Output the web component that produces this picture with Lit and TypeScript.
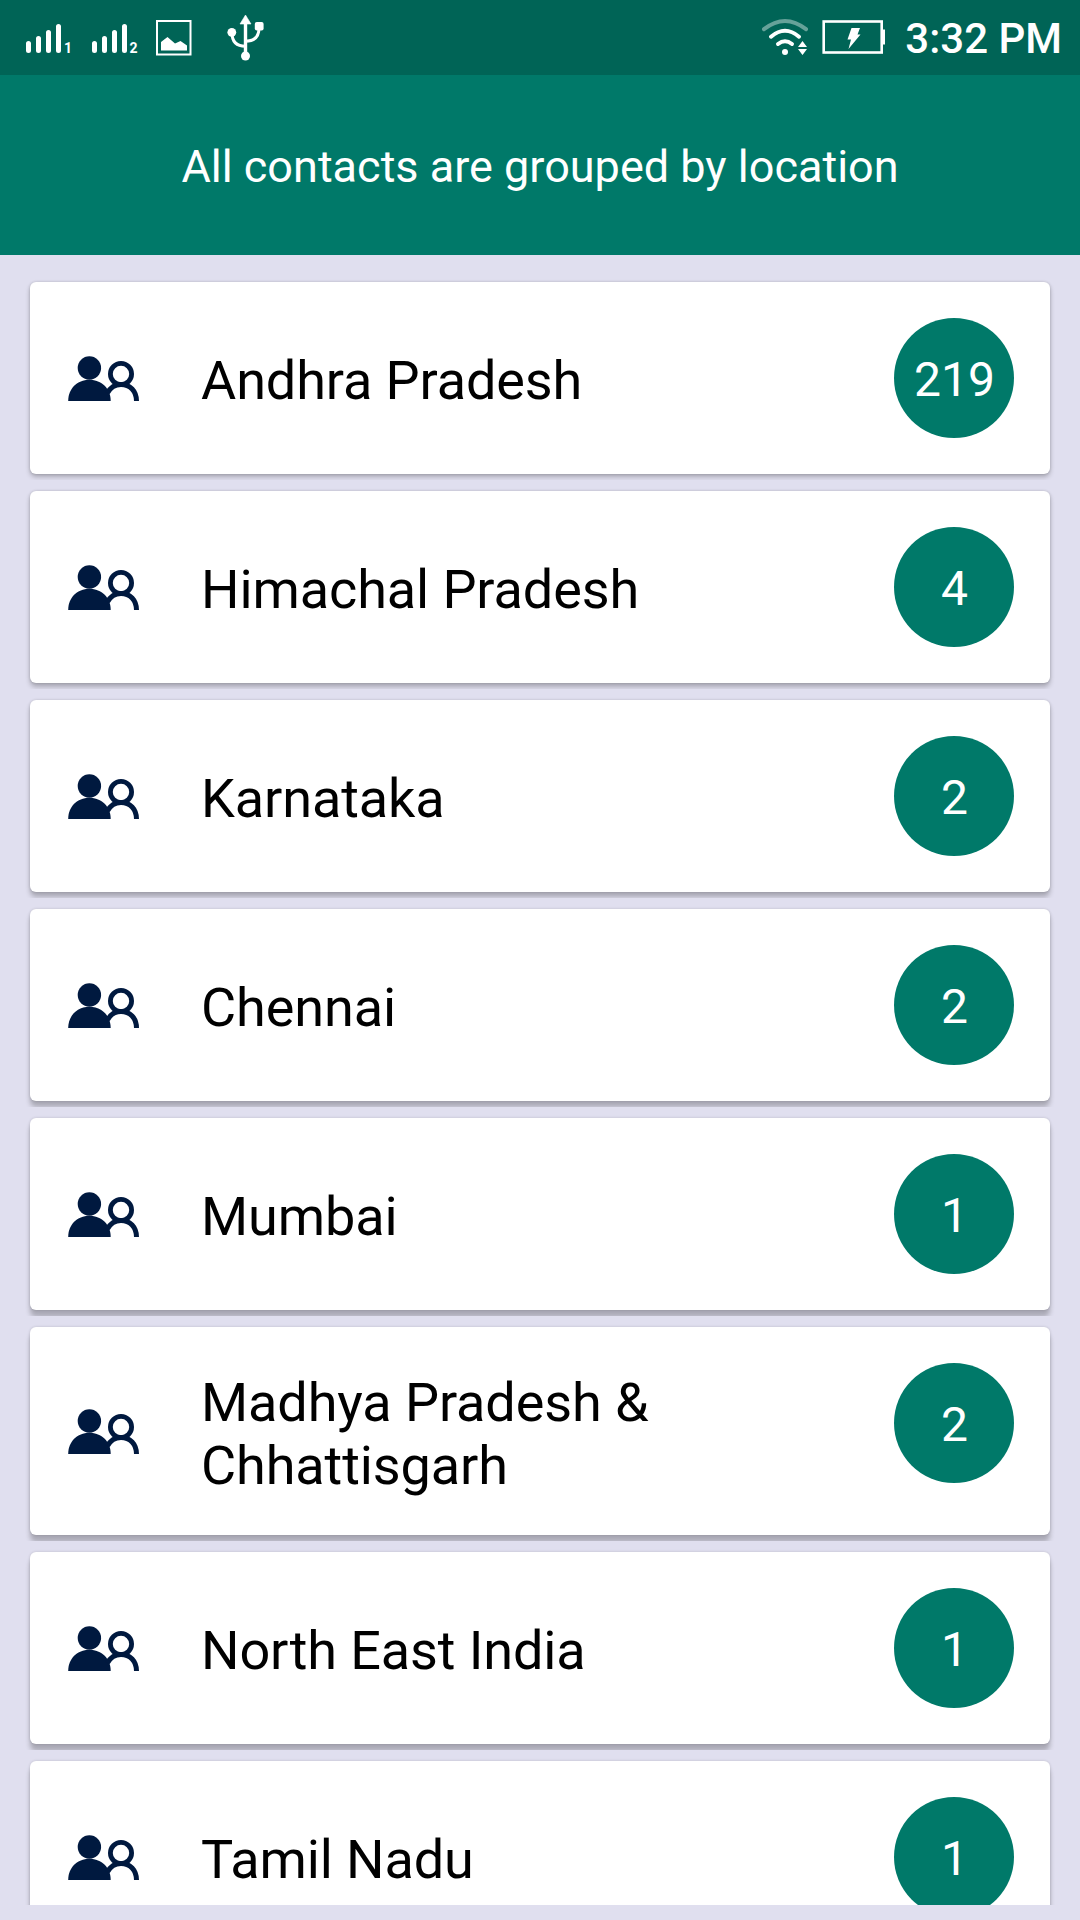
import { LitElement, html, css } from "lit";
import { customElement, property } from "lit/decorators.js";

interface Group {
  name: string;
  count: number;
}

const GROUPS: Group[] = [
  { name: "Andhra Pradesh", count: 219 },
  { name: "Himachal Pradesh", count: 4 },
  { name: "Karnataka", count: 2 },
  { name: "Chennai", count: 2 },
  { name: "Mumbai", count: 1 },
  { name: "Madhya Pradesh & Chhattisgarh", count: 2 },
  { name: "North East India", count: 1 },
  { name: "Tamil Nadu", count: 1 },
];

@customElement("status-bar")
export class StatusBar extends LitElement {
  static styles = css`
    :host {
      display: flex;
      justify-content: space-between;
      height: 75px;
      background: #006456;
      color: #fff;
      font: 500 42px/75px Roboto, sans-serif;
    }
    .icons {
      display: block;
      flex: none;
    }
    .right {
      display: flex;
    }
    .clock {
      padding: 1px 18px 0 20px;
      white-space: nowrap;
      height: 74px;
    }
    .sim {
      font: 700 14px Roboto, sans-serif;
    }
  `;

  render() {
    return html`
      <svg class="icons" width="290" height="75" viewBox="0 0 290 75" fill="#fff">
        <g stroke="#fff" stroke-width="5" stroke-linecap="round">
          <path d="M28.5 43.5V50.5M38.5 38.5V50.5M48.5 32.5V50.5M58.5 26.5V50.5" />
          <path d="M94.5 43.5V50.5M104.5 38.5V50.5M114.5 32.5V50.5M124.5 26.5V50.5" />
        </g>
        <text class="sim" x="64" y="53">1</text>
        <text class="sim" x="129.5" y="53">2</text>
        <rect x="157" y="21" width="33.500" height="33.500" fill="none" stroke="#fff" stroke-width="2" />
        <path d="M161 50.5V42L167.500 37L175 43.500L180.500 41L187 45.500V50.500Z" />
        <path d="M245.500 56V22" stroke="#fff" stroke-width="3.4" fill="none" />
        <path d="M245.500 15L251 24H240Z" stroke="#fff" stroke-width=".6" />
        <circle cx="231.800" cy="32.300" r="4.400" />
        <circle cx="245.500" cy="56" r="4.500" />
        <rect x="254.800" y="22" width="8.800" height="8.400" rx="2" />
        <path
          d="M232 33C232 42 237 46.200 245.500 46.200M259 28C259 37 254 41.200 245.500 41.200"
          fill="none"
          stroke="#fff"
          stroke-width="3"
        />
      </svg>
      <div class="right">
        <svg class="icons" width="130" height="75" viewBox="755 0 130 75" fill="#fff">
          <g fill="none" stroke="#fff" stroke-width="4" stroke-linecap="round">
            <path d="M764 29.200Q785 12.800 806 29.200" opacity=".4" />
            <path d="M771 36.700Q785 24.800 799 36.700" />
            <path d="M778 44Q785 38.500 792 44" />
          </g>
          <circle cx="785" cy="52" r="3" />
          <path d="M802.500 41L807 47H798ZM802.500 55L807 49H798Z" />
          <rect x="823.700" y="21.500" width="58" height="31" fill="none" stroke="#fff" stroke-width="2.600" />
          <path d="M881 29.500H885V44.500H881Z" />
          <path d="M851.500 28H860L857.500 34.500H860.500L848.500 49L851 39.500H847.500Z" />
        </svg>
        <div class="clock">3:32 PM</div>
      </div>
    `;
  }
}

@customElement("group-card")
export class GroupCard extends LitElement {
  @property() name = "";
  @property({ type: Number }) count = 0;

  /* The shadow lengthens the further down the list a card sits. */
  @property({ type: Number }) depth = 0;

  static styles = css`
    :host {
      display: block;
      flex: none;
    }
    .row {
      overflow: hidden;
      padding: 11px 30px 6px;
    }
    .card {
      box-sizing: border-box;
      display: flex;
      align-items: center;
      min-height: 192px;
      padding: 0 36px;
      border-radius: 6px;
      background: #fff;
      box-shadow: 0 calc(3px + var(--depth) * 0.8px) 5px rgba(0, 0, 0, 0.24),
        0 0 3px rgba(0, 0, 0, 0.16);
    }
    .people {
      display: block;
      flex: none;
      width: 76px;
      height: 50px;
    }
    .name {
      flex: 1;
      box-sizing: border-box;
      max-width: 560px;
      margin-left: 59px;
      padding: 43.6px 0 38.4px;
      color: #000;
      font: 400 54px/63px Roboto, sans-serif;
      letter-spacing: -0.1px;
    }
    .badge {
      box-sizing: border-box;
      flex: none;
      align-self: flex-start;
      width: 120px;
      height: 120px;
      margin-top: 36px;
      margin-left: auto;
      padding: 3px 0 0 1px;
      border-radius: 50%;
      background: #007969;
      color: #fff;
      font: 400 48px/117px Roboto, sans-serif;
      text-align: center;
    }
  `;

  render() {
    return html`
      <div class="row" style="--depth: ${this.depth}">
        <div class="card">
          <svg class="people" viewBox="66 353 76 50" fill="#00193f">
            <circle cx="89.400" cy="368" r="11.700" />
            <path d="M68.200 401C68.200 389 77 379.800 89.400 379.800S110.700 389 110.700 401Z" />
            <g fill="none" stroke="#00193f">
              <circle cx="121" cy="374" r="10.600" stroke-width="4.800" />
              <path d="M107.500 393C110.500 387 115 384.400 121 384.400C130 384.400 136.500 391 136.500 401" stroke-width="5" />
            </g>
          </svg>
          <div class="name">${this.name}</div>
          <div class="badge">${this.count}</div>
        </div>
      </div>
    `;
  }
}

@customElement("app-root")
export class AppRoot extends LitElement {
  static styles = css`
    :host {
      display: flex;
      flex-direction: column;
      box-sizing: border-box;
      width: 1080px;
      height: 1920px;
      padding-bottom: 15px;
      overflow: hidden;
      background: #e0dfef;
    }
    .title {
      box-sizing: border-box;
      flex: none;
      height: 180px;
      padding-top: 3px;
      background: #007969;
      color: #fff;
      font: 400 45px/177px Roboto, sans-serif;
      text-align: center;
    }
    .list {
      display: flex;
      flex: 1;
      flex-direction: column;
      min-height: 0;
      padding-top: 16px;
      overflow: hidden;
    }
  `;

  render() {
    return html`
      <status-bar></status-bar>
      <header class="title">All contacts are grouped by location</header>
      <main class="list">
        ${GROUPS.map(
          (g, i) => html`<group-card .name=${g.name} .count=${g.count} .depth=${Math.min(i, 5)}></group-card>`
        )}
      </main>
    `;
  }
}
